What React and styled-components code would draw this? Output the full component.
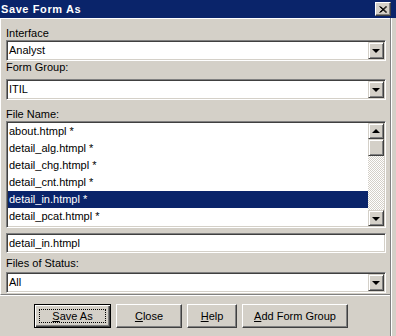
import React from 'react'
import styled, { createGlobalStyle } from 'styled-components'

const Global = createGlobalStyle`
  html, body { margin: 0; padding: 0; background: #d4d0c8; }
  body { font-family: 'Liberation Sans', Arial, sans-serif; font-size: 11px; color: #000; }
`

const Window = styled.div`
  width: 396px;
  height: 336px;
  background: #d4d0c8;
  overflow: hidden;
  display: flex;
  flex-direction: column;
`

const TitleBar = styled.div`
  height: 18px;
  background: #0a246a;
  display: flex;
  align-items: center;
  justify-content: space-between;
  padding: 0 5px 0 1px;
  color: #fff;
  font-weight: bold;
  font-size: 11px;
  letter-spacing: 0.6px;
  flex-shrink: 0;
`

const CloseBox = styled.div`
  width: 16px;
  height: 14px;
  box-sizing: border-box;
  background: #d4d0c8;
  border: 1px solid;
  border-color: #fff #404040 #404040 #fff;
  box-shadow: inset -1px -1px #808080;
  display: flex;
  align-items: center;
  justify-content: center;
`

const Body = styled.div`
  width: 392px;
  flex: 1;
  box-shadow: inset -1px 0 #fff, inset -2px 0 #808080;
  display: flex;
  flex-direction: column;
`

const Panel = styled.div`
  width: 390px;
  box-sizing: border-box;
  border-top: 1px solid #fff;
  border-left: 1px solid #fff;
  border-bottom: 1px solid #808080;
  box-shadow: 0 1px #fff;
  padding: 0 4px 1px 5px;
  display: flex;
  flex-direction: column;
`

const Label = styled.div`
  height: 13px;
  line-height: 13px;
  margin-top: ${p => p.$top}px;
  margin-bottom: ${p => p.$bottom || 0}px;
  white-space: nowrap;
`

const Sunken = styled.div`
  box-sizing: border-box;
  background: #fff;
  border: 1px solid;
  border-color: #808080 #fff #fff #808080;
  box-shadow: inset 1px 1px #404040, inset -1px -1px #d4d0c8;
  padding: 1px;
`

const Combo = styled(Sunken)`
  height: 21px;
  display: flex;
  align-items: stretch;
`

const TextBox = styled(Sunken)`
  height: 20px;
  margin-top: 5px;
  display: flex;
  align-items: center;
`

const Value = styled.div`
  flex: 1;
  padding-left: 1px;
  line-height: 17px;
  white-space: nowrap;
`

const Raised = styled.div`
  box-sizing: border-box;
  background: #d4d0c8;
  border: 1px solid;
  border-color: #d4d0c8 #404040 #404040 #d4d0c8;
  box-shadow: inset 1px 1px #fff, inset -1px -1px #808080;
  display: flex;
  align-items: center;
  justify-content: center;
`

const ArrowBtn = styled(Raised)`
  width: 16px;
  height: ${p => p.$h || 17}px;
  flex-shrink: 0;
`

const Arrow = styled.div`
  width: 0;
  height: 0;
  border-left: 4px solid transparent;
  border-right: 4px solid transparent;
  ${p => (p.$up ? 'border-bottom: 4px solid #000;' : 'border-top: 4px solid #000;')}
  margin-top: ${p => (p.$up ? -1 : 1)}px;
`

const List = styled(Sunken)`
  height: 107px;
  display: flex;
  overflow: hidden;
`

const Items = styled.div`
  flex: 1;
  overflow: hidden;
`

const Item = styled.div`
  height: 17px;
  line-height: 17px;
  padding-left: 1px;
  white-space: nowrap;
  background: ${p => (p.$selected ? '#0a246a' : 'transparent')};
  color: ${p => (p.$selected ? '#fff' : '#000')};
`

const ScrollBar = styled.div`
  width: 16px;
  display: flex;
  flex-direction: column;
`

const Thumb = styled(Raised)`
  width: 16px;
  height: 17px;
`

const Track = styled.div`
  flex: 1;
  background: repeating-conic-gradient(#fff 0 25%, #d4d0c8 0 50%) 0 0 / 2px 2px;
`

const ButtonRow = styled.div`
  display: flex;
  gap: 5px;
  padding: 9px 0 0 34px;
`

const Button = styled.div`
  width: ${p => p.$w}px;
  height: 24px;
  box-sizing: border-box;
  background: #d4d0c8;
  border: 1px solid;
  border-color: ${p => (p.$default ? '#000' : '#fff #404040 #404040 #fff')};
  box-shadow: ${p =>
    p.$default
      ? 'inset 1px 1px #fff, inset -1px -1px #404040, inset -2px -2px #808080'
      : 'inset -1px -1px #808080'};
  display: flex;
  align-items: center;
  justify-content: center;
  padding: 3px;
`

const Focus = styled.div`
  align-self: stretch;
  flex: 1;
  display: flex;
  align-items: center;
  justify-content: center;
  border: 1px dotted ${p => (p.$on ? '#000' : 'transparent')};
  margin: 1px;
  line-height: 13px;
`

const files = [
  'about.htmpl *',
  'detail_alg.htmpl *',
  'detail_chg.htmpl *',
  'detail_cnt.htmpl *',
  'detail_in.htmpl *',
  'detail_pcat.htmpl *',
]

const DropDown = ({ value }) => (
  <Combo>
    <Value>{value}</Value>
    <ArrowBtn>
      <Arrow />
    </ArrowBtn>
  </Combo>
)

const App = () => (
  <Window>
    <Global />
    <TitleBar>
      <span>Save Form As</span>
      <CloseBox>
        <svg width="8" height="7" viewBox="0 0 8 7">
          <path d="M0.5 0.5 L7 6.5 M1.5 0.5 L8 6.5 M7 0.5 L0.5 6.5 M8 0.5 L1.5 6.5" stroke="#000" strokeWidth="1" />
        </svg>
      </CloseBox>
    </TitleBar>
    <Body>
      <Panel>
        <Label $top={8}>Interface</Label>
        <DropDown value="Analyst" />
        <Label $top={0} $bottom={5}>Form Group:</Label>
        <DropDown value="ITIL" />
        <Label $top={8}>File Name:</Label>
        <List>
          <Items>
            {files.map(f => (
              <Item key={f} $selected={f === 'detail_in.htmpl *'}>
                {f}
              </Item>
            ))}
          </Items>
          <ScrollBar>
            <ArrowBtn $h={16}>
              <Arrow $up />
            </ArrowBtn>
            <Thumb />
            <Track />
            <ArrowBtn $h={16}>
              <Arrow />
            </ArrowBtn>
          </ScrollBar>
        </List>
        <TextBox>
          <Value>detail_in.htmpl</Value>
        </TextBox>
        <Label $top={4} $bottom={2}>Files of Status:</Label>
        <DropDown value="All" />
      </Panel>
      <ButtonRow>
        <Button $w={77} $default>
          <Focus $on>
            <u>S</u>ave As
          </Focus>
        </Button>
        <Button $w={66}>
          <Focus>
            <u>C</u>lose
          </Focus>
        </Button>
        <Button $w={50}>
          <Focus>
            <u>H</u>elp
          </Focus>
        </Button>
        <Button $w={106}>
          <Focus>
            <u>A</u>dd Form Group
          </Focus>
        </Button>
      </ButtonRow>
    </Body>
  </Window>
)

export default App
